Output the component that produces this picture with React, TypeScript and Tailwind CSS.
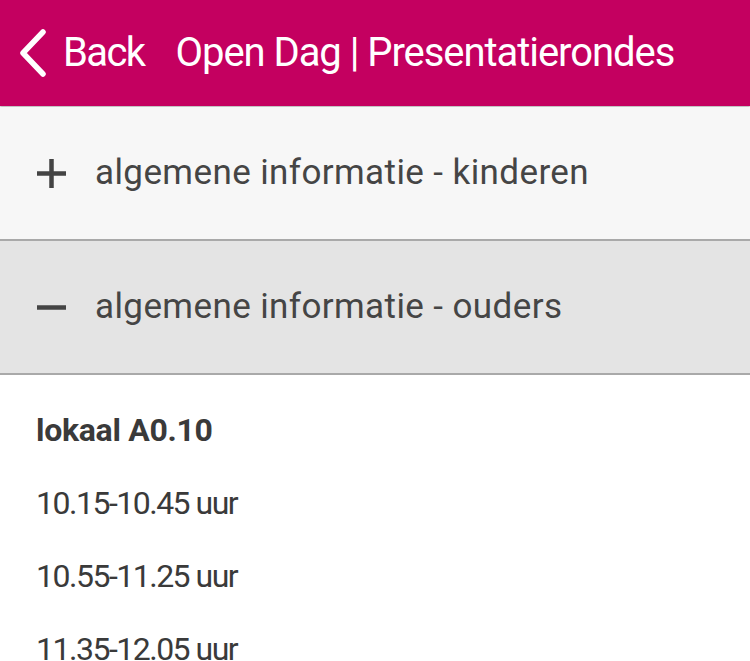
const times = ['10.15-10.45 uur', '10.55-11.25 uur', '11.35-12.05 uur', '12.15-12.45 uur']

function Section({ title, open }: { title: string; open?: boolean }) {
  return (
    <div
      className={`flex h-[134px] items-center border-b-2 border-[#a9a9a9] pl-[37px] ${
        open ? 'bg-[#e4e4e4]' : 'bg-[#f7f7f7]'
      }`}
    >
      <svg className="h-[29px] w-[29px] shrink-0" viewBox="0 0 29 29">
        <rect x="0" y="12.25" width="29" height="4.5" fill="#444" />
        {!open && <rect x="12.25" y="0" width="4.5" height="29" fill="#444" />}
      </svg>
      <span className="ml-[29px] text-[35px] tracking-[0.4px] text-[#454545]">{title}</span>
    </div>
  )
}

export default function App() {
  return (
    <div className="min-h-screen bg-white font-['Roboto',sans-serif]">
      <header className="flex h-[106px] items-center bg-[#c40060] text-white shadow-[0_1px_2px_rgba(0,0,0,0.35)]">
        <svg className="ml-[18px] h-[48px] w-[29px]" viewBox="0 0 29 48" fill="none">
          <path d="M25 3 L5 24 L25 45" stroke="white" strokeWidth="5.5" strokeLinecap="round" strokeLinejoin="round" />
        </svg>
        <span className="ml-[16px] text-[40px] tracking-[-1.6px]">Back</span>
        <span className="ml-[31px] text-[40px] tracking-[-1.05px]">Open Dag | Presentatierondes</span>
      </header>

      <div className="pt-[1px]">
        <Section title="algemene informatie - kinderen" />
        <Section title="algemene informatie - ouders" open />
      </div>

      <div className="px-[36px] pt-[19px] text-[32px] leading-[73px] tracking-[-1.5px] text-[#3a3a3a]">
        <div className="font-bold tracking-[-0.3px]">lokaal A0.10</div>
        {times.map((t) => (
          <div key={t}>{t}</div>
        ))}
      </div>
    </div>
  )
}
